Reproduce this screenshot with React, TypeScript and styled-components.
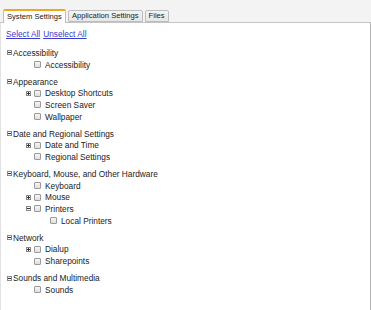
import React from "react";
import styled, { createGlobalStyle } from "styled-components";

const Global = createGlobalStyle`
  html, body { margin: 0; padding: 0; background: #fff; }
  body { font-family: "Liberation Sans", Arial, sans-serif; color: #222; }
  * { box-sizing: border-box; }
`;

const Page = styled.div`
  width: 371px;
  height: 310px;
  display: flex;
  flex-direction: column;
  overflow: hidden;
`;

const TabBar = styled.div`
  height: 23px;
  flex: none;
  background: #f3f3f3;
  border-bottom: 1px solid #c4c4c4;
  display: flex;
  align-items: flex-end;
  padding-left: 3px;
  gap: 2px;
`;

const Tab = styled.div<{ $active?: boolean }>`
  font-size: 7.6px;
  line-height: 1;
  color: #222;
  padding: 0 3px;
  display: flex;
  align-items: center;
  height: ${(p) => (p.$active ? "14px" : "12px")};
  margin-bottom: ${(p) => (p.$active ? "-1px" : "0")};
  background: ${(p) => (p.$active ? "#fdfdfd" : "linear-gradient(#f4f4f4, #e6e6e6)")};
  border: 1px solid #bdbdbd;
  border-bottom: ${(p) => (p.$active ? "none" : "1px solid #bdbdbd")};
  border-top: ${(p) => (p.$active ? "2px solid #f2a51f" : "1px solid #bdbdbd")};
  border-radius: 2px 2px 0 0;
`;

const Panel = styled.div`
  flex: 1;
  border-left: 1px solid #e2e2e2;
  border-right: 1px solid #b3b3b3;
  padding: 5px 0 0 5px;
`;

const Links = styled.div`
  display: flex;
  gap: 3px;
  height: 11px;
  align-items: center;
  margin-bottom: 8px;
`;

const LinkA = styled.a`
  font-size: 8.3px;
  color: #3a3ad0;
  text-decoration: underline;
  cursor: pointer;
`;

const Group = styled.div`
  & + & { margin-top: 5.3px; }
`;

const Row = styled.div<{ $indent: number }>`
  height: 11.7px;
  display: flex;
  align-items: center;
  font-size: 8.3px;
  color: #222;
  padding-left: ${(p) => p.$indent}px;
  white-space: nowrap;
`;

const Expander = styled.span<{ $kind: "plus" | "minus" }>`
  position: relative;
  width: 5px;
  height: 5px;
  border: 1px solid #888;
  background: #fafafa;
  flex: none;
  &::before {
    content: "";
    position: absolute;
    left: 0;
    right: 0;
    top: 1px;
    height: 1px;
    background: #333;
  }
  &::after {
    content: "";
    display: ${(p) => (p.$kind === "plus" ? "block" : "none")};
    position: absolute;
    top: 0;
    bottom: 0;
    left: 1px;
    width: 1px;
    background: #333;
  }
`;

const Slot = styled.span`
  width: 8px;
  flex: none;
  display: flex;
  align-items: center;
`;

const Check = styled.span`
  width: 7px;
  height: 7px;
  border: 1px solid #9a9a9a;
  border-radius: 1px;
  background: linear-gradient(#f6f6f6, #dedede);
  flex: none;
  margin-right: 4px;
`;

const HeaderLabel = styled.span`
  margin-left: 1px;
`;

type Item = { label: string; exp?: "plus" | "minus"; children?: Item[] };
type G = { title: string; items: Item[] };

const data: G[] = [
  { title: "Accessibility", items: [{ label: "Accessibility" }] },
  {
    title: "Appearance",
    items: [{ label: "Desktop Shortcuts", exp: "plus" }, { label: "Screen Saver" }, { label: "Wallpaper" }],
  },
  {
    title: "Date and Regional Settings",
    items: [{ label: "Date and Time", exp: "plus" }, { label: "Regional Settings" }],
  },
  {
    title: "Keyboard, Mouse, and Other Hardware",
    items: [
      { label: "Keyboard" },
      { label: "Mouse", exp: "plus" },
      { label: "Printers", exp: "minus", children: [{ label: "Local Printers" }] },
    ],
  },
  { title: "Network", items: [{ label: "Dialup", exp: "plus" }, { label: "Sharepoints" }] },
  { title: "Sounds and Multimedia", items: [{ label: "Sounds" }] },
];

function renderItems(items: Item[], depth: number): React.ReactNode[] {
  const out: React.ReactNode[] = [];
  items.forEach((it, i) => {
    out.push(
      <Row key={`${depth}-${i}-${it.label}`} $indent={20 + 16 * (depth - 1)}>
        <Slot>{it.exp && <Expander $kind={it.exp} />}</Slot>
        <Check />
        <span>{it.label}</span>
      </Row>
    );
    if (it.children) out.push(...renderItems(it.children, depth + 1));
  });
  return out;
}

export default function App() {
  return (
    <>
      <Global />
      <Page>
        <TabBar>
          <Tab $active>System Settings</Tab>
          <Tab>Application Settings</Tab>
          <Tab>Files</Tab>
        </TabBar>
        <Panel>
          <Links>
            <LinkA>Select All</LinkA>
            <LinkA>Unselect All</LinkA>
          </Links>
          {data.map((g) => (
            <Group key={g.title}>
              <Row $indent={1}>
                <Expander $kind="minus" />
                <HeaderLabel>{g.title}</HeaderLabel>
              </Row>
              {renderItems(g.items, 1)}
            </Group>
          ))}
        </Panel>
      </Page>
    </>
  );
}
